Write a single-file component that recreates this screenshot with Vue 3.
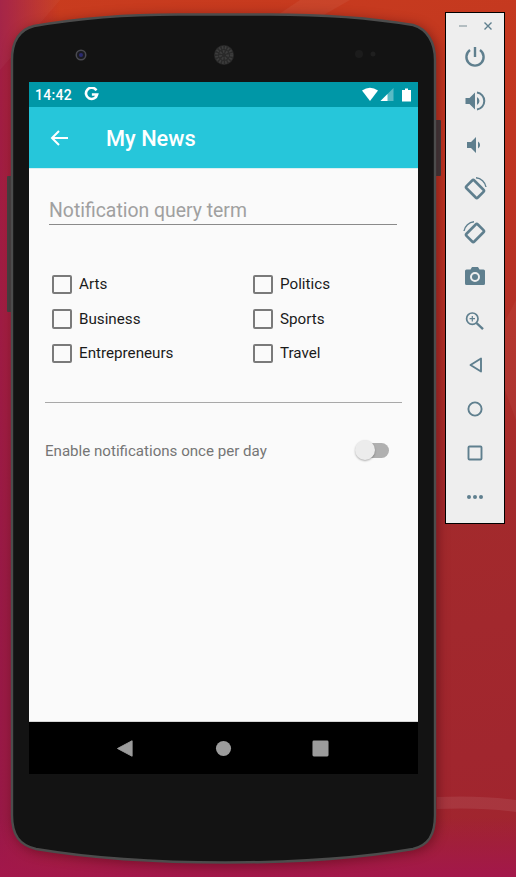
<template>
  <div class="desktop">
    <svg class="wallpaper" viewBox="0 0 516 877" aria-hidden="true">
      <path d="M60 0 L0 70 L0 0 Z" fill="#fff" opacity="0.03" />
      <path d="M300 0 L240 40 L280 40 L350 0 Z" fill="#fff" opacity="0.05" />
      <path d="M437 797 Q480 795 516 800 L516 812 Q480 807 437 809 Z" fill="#fff" opacity="0.08" />
      <path d="M516 300 L490 350 L516 420 Z" fill="#fff" opacity="0.04" />
    </svg>

    <div class="phone">
      <svg class="shell" viewBox="0 0 516 877" aria-hidden="true">
        <rect x="7" y="176" width="7" height="136" rx="1" fill="#434343" />
        <rect x="433" y="120" width="8" height="56" rx="1" fill="#3c3c3c" />
        <path class="body" d="M12 60 C12 42 18 30 34 26 C80 18 130 14.5 178 14.5 L270 14.5 C320 14.5 365 17 413 25 C427 29 435 42 435 60 L435 815 C435 836 428 845 413 849 C360 858 300 862.5 225 862.5 C150 862.5 90 858 36 849 C20 845 12 836 12 815 Z" />
        <circle cx="81" cy="55" r="5.5" fill="#4a4a50" />
        <circle cx="81" cy="55" r="4" fill="#1a1a22" />
        <circle cx="81" cy="55" r="2" fill="#2a2a70" />
        <circle cx="224" cy="55" r="10" fill="#2a2a2a" />
        <circle cx="224" cy="55" r="7.5" fill="none" stroke="#3d3d3d" stroke-width="3" stroke-dasharray="1.5 1.5" />
        <circle cx="224" cy="55" r="3.5" fill="none" stroke="#3d3d3d" stroke-width="3" stroke-dasharray="1.5 1.5" />
        <circle cx="359" cy="54" r="4" fill="#1c1c1c" />
        <circle cx="373" cy="54" r="2.5" fill="#1f1f1f" />
      </svg>

      <div class="screen">
        <div class="status-bar">
          <span class="time">14:42</span>
          <svg class="g-icon" viewBox="0 0 16 16" aria-hidden="true">
            <path d="M13.2 3.6 A6 6 0 1 0 14 8 H8.4" fill="none" stroke="#fff" stroke-width="2.8" />
          </svg>
          <span class="status-space"></span>
          <svg class="status-icons" viewBox="0 0 52 16" aria-hidden="true">
            <path d="M2 3.5 Q10 -2 18 3.5 L10 14 Z" fill="#fff" />
            <path d="M20.5 14 L33.5 1 V14 Z" fill="#fff" opacity="0.35" />
            <path d="M20.5 14 L27.5 7 V14 Z" fill="#fff" />
            <path d="M45 3 V1.5 H48 V3 H51 V14.5 H42 V3 Z" fill="#fff" />
          </svg>
        </div>

        <header class="toolbar">
          <svg class="back" viewBox="0 0 20 18" aria-hidden="true">
            <path d="M18 9 H1.5 M9 2 L2 9 L9 16" fill="none" stroke="#fff" stroke-width="2" />
          </svg>
          <h1>My News</h1>
        </header>

        <main class="content">
          <div class="query">Notification query term</div>

          <div class="topics">
            <label v-for="topic in topics" :key="topic" class="topic">
              <span class="box"></span>
              <span>{{ topic }}</span>
            </label>
          </div>

          <hr class="divider" />

          <div class="notify">
            <span>Enable notifications once per day</span>
            <span class="switch"><i class="thumb"></i></span>
          </div>
        </main>

        <nav class="nav-bar">
          <svg viewBox="0 0 18 18" aria-hidden="true"><path d="M0.5 9 L16 0.8 V17.2 Z" fill="#9c9c9c" stroke="#9c9c9c" stroke-linejoin="round" /></svg>
          <svg viewBox="0 0 18 18" aria-hidden="true"><circle cx="9" cy="9" r="8" fill="#9c9c9c" /></svg>
          <svg viewBox="0 0 18 18" aria-hidden="true"><rect x="0.5" y="0.5" width="17" height="17" rx="1.5" fill="#9c9c9c" /></svg>
        </nav>
      </div>
    </div>

    <aside class="controls">
      <div class="window-buttons">
        <svg viewBox="0 0 10 10" aria-hidden="true"><path d="M1 5 H9" /></svg>
        <svg viewBox="0 0 10 10" aria-hidden="true"><path d="M1.5 1.5 L8.5 8.5 M8.5 1.5 L1.5 8.5" class="dark" /></svg>
      </div>

      <svg class="tool" viewBox="0 0 24 24" aria-hidden="true">
        <path d="M12 2 V12" fill="none" stroke="#5f7f8e" stroke-width="2.4" />
        <path d="M7 5 A8.6 8.6 0 1 0 17 5" fill="none" stroke="#5f7f8e" stroke-width="2.4" />
      </svg>
      <svg class="tool" viewBox="0 0 24 24" aria-hidden="true">
        <path d="M2.5 9 H6.5 L12 3.5 V20.5 L6.5 15 H2.5 Z" fill="#5f7f8e" />
        <path d="M14 8 A4.5 4.5 0 0 1 14 16 Z" fill="#5f7f8e" />
        <path d="M14 3.5 A8.6 8.6 0 0 1 14 20.5" fill="none" stroke="#5f7f8e" stroke-width="2" />
      </svg>
      <svg class="tool" viewBox="0 0 24 24" aria-hidden="true">
        <path d="M4 9 H8 L13 4 V20 L8 15 H4 Z" fill="#5f7f8e" />
        <path d="M15 8.5 A4 4 0 0 1 15 15.5 Z" fill="#5f7f8e" />
      </svg>
      <svg class="tool" viewBox="0 0 24 24" aria-hidden="true">
        <rect x="6.5" y="4" width="11" height="16" rx="1.5" transform="rotate(-45 12 12)" fill="none" stroke="#5f7f8e" stroke-width="2.6" />
        <path d="M13 0.8 A11 11 0 0 1 23 10" fill="none" stroke="#5f7f8e" stroke-width="1.4" />
      </svg>
      <svg class="tool" viewBox="0 0 24 24" aria-hidden="true">
        <rect x="6.5" y="4" width="11" height="16" rx="1.5" transform="rotate(45 12 12)" fill="none" stroke="#5f7f8e" stroke-width="2.6" />
        <path d="M11 0.8 A11 11 0 0 0 1 10" fill="none" stroke="#5f7f8e" stroke-width="1.4" />
      </svg>
      <svg class="tool" viewBox="0 0 24 24" aria-hidden="true">
        <path fill-rule="evenodd" d="M3.5 4.5 H7.5 L9 2 H15 L16.5 4.5 H20.5 Q22 4.5 22 6 V18.5 Q22 20 20.5 20 H3.5 Q2 20 2 18.5 V6 Q2 4.5 3.5 4.5 Z M12 7 A5 5 0 1 0 12 17 A5 5 0 1 0 12 7 Z" fill="#5f7f8e" />
        <circle cx="12" cy="12" r="3" fill="#5f7f8e" />
      </svg>
      <svg class="tool" viewBox="0 0 24 24" aria-hidden="true">
        <circle cx="9.3" cy="9.7" r="5.7" fill="none" stroke="#5f7f8e" stroke-width="1.7" />
        <path d="M13.5 14 L20 20.2" fill="none" stroke="#5f7f8e" stroke-width="2.4" />
        <path d="M9.3 7 V12.4 M6.6 9.7 H12" fill="none" stroke="#5f7f8e" stroke-width="1.2" />
      </svg>
      <svg class="tool" viewBox="0 0 24 24" aria-hidden="true">
        <path d="M7.5 12 L18 5.5 V18.5 Z" fill="none" stroke="#5f7f8e" stroke-width="1.9" stroke-linejoin="round" />
      </svg>
      <svg class="tool" viewBox="0 0 24 24" aria-hidden="true">
        <circle cx="12" cy="12" r="6.6" fill="none" stroke="#5f7f8e" stroke-width="1.9" />
      </svg>
      <svg class="tool" viewBox="0 0 24 24" aria-hidden="true">
        <rect x="5.5" y="5.5" width="13" height="13" rx="1" fill="none" stroke="#5f7f8e" stroke-width="1.9" />
      </svg>
      <svg class="tool" viewBox="0 0 24 24" aria-hidden="true">
        <circle cx="6" cy="12" r="2" fill="#5f7f8e" />
        <circle cx="12" cy="12" r="2" fill="#5f7f8e" />
        <circle cx="18" cy="12" r="2" fill="#5f7f8e" />
      </svg>
    </aside>
  </div>
</template>

<script setup>
const topics = ['Arts', 'Politics', 'Business', 'Sports', 'Entrepreneurs', 'Travel']
</script>

<style>
html,
body {
  margin: 0;
  background: #a82a2a;
}
</style>

<style scoped>
.desktop {
  position: relative;
  width: 516px;
  height: 877px;
  overflow: hidden;
  font-family: Roboto, "Liberation Sans", sans-serif;
  background:
    linear-gradient(to top, #a3174b 0, rgba(163, 23, 75, 0) 60px),
    linear-gradient(to right, rgba(150, 20, 80, 0.75) 0, rgba(150, 20, 80, 0) 60px),
    linear-gradient(170deg, #c93c1e 0, #bd3322 30%, #a32a2c 60%, #a0242f 100%);
}

.wallpaper,
.shell {
  position: absolute;
  left: 0;
  top: 0;
  width: 516px;
  height: 877px;
}

.body {
  fill: #131313;
  stroke: #4c4c4c;
  stroke-width: 2.4;
  filter: drop-shadow(2px 2px 6px rgba(60, 0, 10, 0.45));
}

.screen {
  position: absolute;
  left: 29px;
  top: 82px;
  width: 389px;
  height: 692px;
  display: flex;
  flex-direction: column;
  background: #fafafa;
}

.status-bar {
  height: 25px;
  flex: none;
  display: flex;
  align-items: center;
  padding: 0 6px;
  background: #0097a7;
  color: #fff;
}

.time {
  padding-top: 1px;
  font-size: 14px;
  font-weight: 500;
  letter-spacing: 0.3px;
}

.g-icon {
  width: 15px;
  height: 15px;
  margin-left: 12px;
}

.status-space {
  flex: 1;
}

.status-icons {
  width: 52px;
  height: 16px;
}

.toolbar {
  height: 62px;
  flex: none;
  display: flex;
  align-items: center;
  padding-left: 21px;
  box-sizing: border-box;
  background: #26c6da;
  border-bottom: 1px solid #d8eef1;
  color: #fff;
}

.back {
  width: 20px;
  height: 18px;
}

.toolbar h1 {
  margin: 1px 0 0 36px;
  font-size: 21.8px;
  font-weight: 500;
}

.content {
  flex: 1;
  display: flex;
  flex-direction: column;
  padding: 0 16px;
  border-bottom: 1px solid #d5d5d5;
}

.query {
  margin: 30px 5px 0 4px;
  height: 25px;
  line-height: 24px;
  font-size: 19.4px;
  color: #a0a0a0;
  border-bottom: 1px solid #8a8a8a;
}

.topics {
  margin: 42px 0 0 7px;
  display: grid;
  grid-template-columns: 201px 1fr;
  grid-auto-rows: 34.5px;
}

.topic {
  display: flex;
  align-items: center;
  gap: 7.5px;
  font-size: 15.2px;
  color: #1a1a1a;
}

.box {
  width: 15.5px;
  height: 15.5px;
  border: 2px solid #7a7a7a;
  border-radius: 2px;
}

.divider {
  margin: 31px 0 0;
  height: 1px;
  border: 0;
  background: #a8a8a8;
}

.notify {
  margin-top: 39px;
  display: flex;
  align-items: center;
  justify-content: space-between;
  padding-right: 13px;
  font-size: 15.1px;
  color: #757575;
}

.switch {
  position: relative;
  width: 24px;
  height: 15px;
  border-radius: 7.5px;
  background: #b0b0b0;
}

.thumb {
  position: absolute;
  left: -10px;
  top: -3px;
  width: 20px;
  height: 20px;
  border-radius: 50%;
  background: #ececec;
  box-shadow: 0 1px 2px rgba(0, 0, 0, 0.3);
}

.nav-bar {
  height: 52px;
  flex: none;
  display: flex;
  align-items: center;
  justify-content: center;
  gap: 80px;
  background: #000;
}

.nav-bar svg {
  width: 17px;
  height: 17px;
}

.nav-bar svg:first-child {
  margin: 0 1px 0 -1px;
}

.controls {
  position: absolute;
  left: 445px;
  top: 12px;
  width: 60px;
  height: 512px;
  box-sizing: border-box;
  display: flex;
  flex-direction: column;
  align-items: center;
  padding-top: 8px;
  background: #eeeeee;
  border: 1px solid #000;
}

.window-buttons {
  width: 100%;
  height: 12px;
  flex: none;
  display: flex;
  justify-content: center;
  gap: 15px;
  margin-bottom: 12px;
}

.window-buttons svg {
  width: 10px;
  height: 10px;
  fill: none;
  stroke: #9aa8ae;
  stroke-width: 1.4;
}

.window-buttons .dark {
  stroke: #5f7f8e;
}

.tool {
  width: 24px;
  height: 24px;
  margin-bottom: 20px;
  flex: none;
}
</style>
